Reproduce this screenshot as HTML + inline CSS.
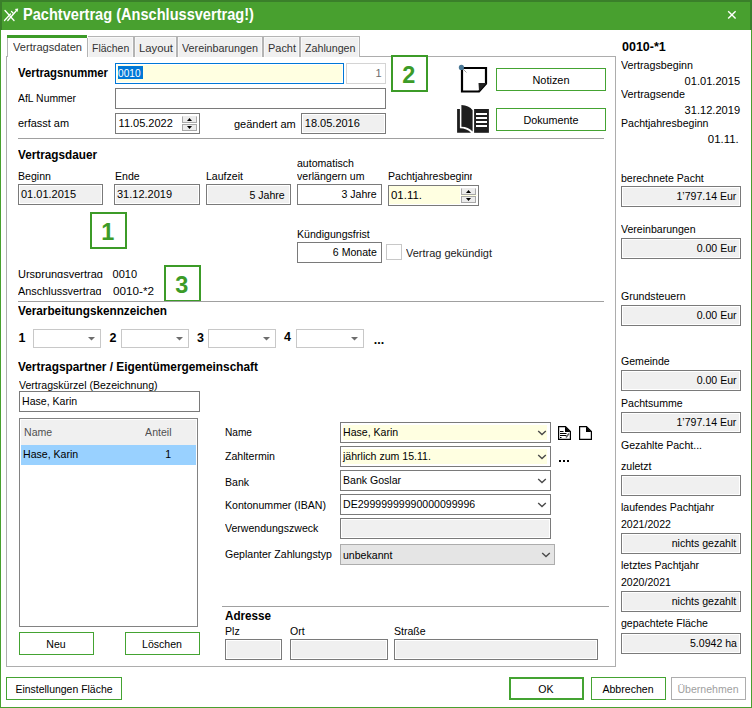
<!DOCTYPE html>
<html><head><meta charset="utf-8"><style>
html,body{margin:0;padding:0;width:752px;height:708px;overflow:hidden;background:#fff}
body{position:relative;font-family:"Liberation Sans",sans-serif}
.t{position:absolute;white-space:nowrap;line-height:1;font-family:"Liberation Sans",sans-serif}
</style></head><body>
<div style="position:absolute;left:0px;top:0px;width:752px;height:708px;background:#fff"></div>
<div style="position:absolute;left:0px;top:0px;width:752px;height:30px;background:#48a02f"></div>
<div style="position:absolute;left:0px;top:0px;width:752px;height:2px;background:#3a7f2a"></div>
<div style="position:absolute;left:0px;top:0px;width:2px;height:30px;background:#3a7f2a"></div>
<div style="position:absolute;left:750px;top:0px;width:2px;height:30px;background:#3a7f2a"></div>
<div style="position:absolute;left:0px;top:30px;width:1px;height:678px;background:#48a02f"></div>
<div style="position:absolute;left:751px;top:30px;width:1px;height:678px;background:#48a02f"></div>
<div style="position:absolute;left:0px;top:707px;width:752px;height:1px;background:#48a02f"></div>
<svg style="position:absolute;left:0;top:0" width="30" height="30" viewBox="0 0 30 30">
<g stroke="#fff" stroke-width="1.3" fill="none" stroke-linecap="round">
<line x1="5" y1="10.5" x2="14" y2="20.5"/>
<line x1="4.5" y1="20.5" x2="10.5" y2="14"/>
<line x1="7.8" y1="20.5" x2="16.5" y2="10.5"/>
<line x1="11.5" y1="11.5" x2="13" y2="13"/>
</g>
<polygon points="14.8,9 18.2,8.6 17.6,12" fill="#fff"/>
</svg>
<div class="t" style="left:23px;top:7.19px;font-size:15.6px;font-weight:bold;color:#fff;transform-origin:left;transform:scaleX(0.9349);">Pachtvertrag (Anschlussvertrag!)</div>
<svg style="position:absolute;left:722px;top:8px" width="16" height="16" viewBox="0 0 16 16">
<g stroke="#fff" stroke-width="1.4"><line x1="6.2" y1="3.2" x2="13.6" y2="10.6"/><line x1="13.6" y1="3.2" x2="6.2" y2="10.6"/></g></svg>
<div style="position:absolute;left:6px;top:56px;width:608px;height:609px;border:1px solid #adadad;background:#fff;"></div>
<div style="position:absolute;left:87px;top:36px;width:45px;height:19px;border:1px solid #b4b4b4;background:#f0f0f0;border-bottom:none;height:20px;box-shadow:inset 1px 1px 0 #f8f8f8,inset -1px 0 0 #f8f8f8"></div>
<div class="t" style="left:91.5px;top:43.19px;font-size:11px;font-weight:normal;color:#333;transform-origin:left;transform:scaleX(0.9506);">Flächen</div>
<div style="position:absolute;left:134px;top:36px;width:41px;height:19px;border:1px solid #b4b4b4;background:#f0f0f0;border-bottom:none;height:20px;box-shadow:inset 1px 1px 0 #f8f8f8,inset -1px 0 0 #f8f8f8"></div>
<div class="t" style="left:138.5px;top:43.19px;font-size:11px;font-weight:normal;color:#333;transform-origin:left;transform:scaleX(1.0295);">Layout</div>
<div style="position:absolute;left:177px;top:36px;width:84px;height:19px;border:1px solid #b4b4b4;background:#f0f0f0;border-bottom:none;height:20px;box-shadow:inset 1px 1px 0 #f8f8f8,inset -1px 0 0 #f8f8f8"></div>
<div class="t" style="left:181.5px;top:43.19px;font-size:11px;font-weight:normal;color:#333;transform-origin:left;transform:scaleX(0.9784);">Vereinbarungen</div>
<div style="position:absolute;left:263px;top:36px;width:35px;height:19px;border:1px solid #b4b4b4;background:#f0f0f0;border-bottom:none;height:20px;box-shadow:inset 1px 1px 0 #f8f8f8,inset -1px 0 0 #f8f8f8"></div>
<div class="t" style="left:267.5px;top:43.19px;font-size:11px;font-weight:normal;color:#333;transform-origin:left;transform:scaleX(0.9954);">Pacht</div>
<div style="position:absolute;left:300px;top:36px;width:58px;height:19px;border:1px solid #b4b4b4;background:#f0f0f0;border-bottom:none;height:20px;box-shadow:inset 1px 1px 0 #f8f8f8,inset -1px 0 0 #f8f8f8"></div>
<div class="t" style="left:304.5px;top:43.19px;font-size:11px;font-weight:normal;color:#333;transform-origin:left;transform:scaleX(0.9714);">Zahlungen</div>
<div style="position:absolute;left:7px;top:35px;width:81px;height:22px;background:#fff"></div>
<div style="position:absolute;left:7px;top:35px;width:80px;height:3px;background:#3c9b28"></div>
<div style="position:absolute;left:7px;top:38px;width:1px;height:19px;background:#b4b4b4"></div>
<div style="position:absolute;left:87px;top:38px;width:1px;height:19px;background:#b4b4b4"></div>
<div class="t" style="left:12.8px;top:42.19px;font-size:11px;font-weight:normal;color:#333;transform-origin:left;transform:scaleX(1.0074);">Vertragsdaten</div>
<div class="t" style="left:622px;top:40.92px;font-size:12.5px;font-weight:bold;color:#000;transform-origin:left;">0010-*1</div>
<div class="t" style="left:621px;top:60.09px;font-size:11px;font-weight:normal;color:#000;transform-origin:left;transform:scaleX(0.9730);">Vertragsbeginn</div>
<div class="t" style="right:12.00px;top:75.89px;font-size:11px;font-weight:normal;color:#000;transform-origin:right;transform:scaleX(1.0081);">01.01.2015</div>
<div class="t" style="left:621px;top:88.79px;font-size:11px;font-weight:normal;color:#000;transform-origin:left;transform:scaleX(0.9781);">Vertragsende</div>
<div class="t" style="right:12.00px;top:104.89px;font-size:11px;font-weight:normal;color:#000;transform-origin:right;transform:scaleX(1.0081);">31.12.2019</div>
<div class="t" style="left:621px;top:118.19px;font-size:11px;font-weight:normal;color:#000;transform-origin:left;transform:scaleX(0.9600);">Pachtjahresbeginn</div>
<div class="t" style="right:13.00px;top:133.79px;font-size:11px;font-weight:normal;color:#000;transform-origin:right;transform:scaleX(1.0414);">01.11.</div>
<div class="t" style="left:621px;top:172.99px;font-size:11px;font-weight:normal;color:#000;transform-origin:left;transform:scaleX(0.9600);">berechnete Pacht</div>
<div style="position:absolute;left:621px;top:186px;width:118px;height:19px;border:1px solid #7a7a7a;background:#f0f0f0;box-shadow:inset 0 0 0 1px #fff"></div>
<div class="t" style="right:15.40px;top:190.59px;font-size:11px;font-weight:normal;color:#000;transform-origin:right;transform:scaleX(0.9600);">1&#8217;797.14 Eur</div>
<div class="t" style="left:621px;top:223.99px;font-size:11px;font-weight:normal;color:#000;transform-origin:left;transform:scaleX(0.9600);">Vereinbarungen</div>
<div style="position:absolute;left:621px;top:238px;width:118px;height:19px;border:1px solid #7a7a7a;background:#f0f0f0;box-shadow:inset 0 0 0 1px #fff"></div>
<div class="t" style="right:15.40px;top:242.59px;font-size:11px;font-weight:normal;color:#000;transform-origin:right;transform:scaleX(0.9600);">0.00 Eur</div>
<div class="t" style="left:621px;top:290.79px;font-size:11px;font-weight:normal;color:#000;transform-origin:left;transform:scaleX(0.9600);">Grundsteuern</div>
<div style="position:absolute;left:621px;top:305px;width:118px;height:19px;border:1px solid #7a7a7a;background:#f0f0f0;box-shadow:inset 0 0 0 1px #fff"></div>
<div class="t" style="right:15.40px;top:309.59px;font-size:11px;font-weight:normal;color:#000;transform-origin:right;transform:scaleX(0.9600);">0.00 Eur</div>
<div class="t" style="left:621px;top:356.09px;font-size:11px;font-weight:normal;color:#000;transform-origin:left;transform:scaleX(0.9600);">Gemeinde</div>
<div style="position:absolute;left:621px;top:370px;width:118px;height:19px;border:1px solid #7a7a7a;background:#f0f0f0;box-shadow:inset 0 0 0 1px #fff"></div>
<div class="t" style="right:15.40px;top:374.59px;font-size:11px;font-weight:normal;color:#000;transform-origin:right;transform:scaleX(0.9600);">0.00 Eur</div>
<div class="t" style="left:621px;top:397.69px;font-size:11px;font-weight:normal;color:#000;transform-origin:left;transform:scaleX(0.9600);">Pachtsumme</div>
<div style="position:absolute;left:621px;top:412px;width:118px;height:19px;border:1px solid #7a7a7a;background:#f0f0f0;box-shadow:inset 0 0 0 1px #fff"></div>
<div class="t" style="right:15.40px;top:416.59px;font-size:11px;font-weight:normal;color:#000;transform-origin:right;transform:scaleX(0.9600);">1&#8217;797.14 Eur</div>
<div class="t" style="left:621px;top:460.79px;font-size:11px;font-weight:normal;color:#000;transform-origin:left;transform:scaleX(0.9600);">zuletzt</div>
<div style="position:absolute;left:621px;top:475px;width:118px;height:19px;border:1px solid #7a7a7a;background:#f0f0f0;box-shadow:inset 0 0 0 1px #fff"></div>
<div class="t" style="left:621px;top:518.79px;font-size:11px;font-weight:normal;color:#000;transform-origin:left;transform:scaleX(0.9600);">2021/2022</div>
<div style="position:absolute;left:621px;top:533px;width:118px;height:19px;border:1px solid #7a7a7a;background:#f0f0f0;box-shadow:inset 0 0 0 1px #fff"></div>
<div class="t" style="right:15.40px;top:537.59px;font-size:11px;font-weight:normal;color:#000;transform-origin:right;transform:scaleX(0.9600);">nichts gezahlt</div>
<div class="t" style="left:621px;top:576.89px;font-size:11px;font-weight:normal;color:#000;transform-origin:left;transform:scaleX(0.9600);">2020/2021</div>
<div style="position:absolute;left:621px;top:591px;width:118px;height:19px;border:1px solid #7a7a7a;background:#f0f0f0;box-shadow:inset 0 0 0 1px #fff"></div>
<div class="t" style="right:15.40px;top:595.59px;font-size:11px;font-weight:normal;color:#000;transform-origin:right;transform:scaleX(0.9600);">nichts gezahlt</div>
<div class="t" style="left:621px;top:618.49px;font-size:11px;font-weight:normal;color:#000;transform-origin:left;transform:scaleX(0.9600);">gepachtete Fläche</div>
<div style="position:absolute;left:621px;top:633px;width:118px;height:19px;border:1px solid #7a7a7a;background:#f0f0f0;box-shadow:inset 0 0 0 1px #fff"></div>
<div class="t" style="right:15.40px;top:637.59px;font-size:11px;font-weight:normal;color:#000;transform-origin:right;transform:scaleX(0.9600);">5.0942 ha</div>
<div class="t" style="left:621px;top:440.39px;font-size:11px;font-weight:normal;color:#000;transform-origin:left;transform:scaleX(0.9600);">Gezahlte Pacht...</div>
<div class="t" style="left:621px;top:502.39px;font-size:11px;font-weight:normal;color:#000;transform-origin:left;transform:scaleX(0.9600);">laufendes Pachtjahr</div>
<div class="t" style="left:621px;top:559.99px;font-size:11px;font-weight:normal;color:#000;transform-origin:left;transform:scaleX(0.9600);">letztes Pachtjahr</div>
<div class="t" style="left:18px;top:67.22px;font-size:12.5px;font-weight:bold;color:#000;transform-origin:left;transform:scaleX(0.9059);">Vertragsnummer</div>
<div style="position:absolute;left:115px;top:63px;width:227px;height:19px;border:1px solid #0078d7;background:#fff;"></div>
<div style="position:absolute;left:117px;top:65px;width:225px;height:17px;background:#ffffe1"></div>
<div style="position:absolute;left:118px;top:66px;width:25px;height:13px;background:#0078d7"></div>
<div class="t" style="left:118.2px;top:68.09px;font-size:11px;font-weight:normal;color:#fff;transform-origin:left;transform:scaleX(0.9195);">0010</div>
<div style="position:absolute;left:346px;top:63px;width:38px;height:19px;border:1px solid #d4d4d4;background:#fff;"></div>
<div class="t" style="right:370.50px;top:68.09px;font-size:11px;font-weight:normal;color:#6d6d6d;transform-origin:right;">1</div>
<div class="t" style="left:18px;top:93.19px;font-size:11px;font-weight:normal;color:#000;transform-origin:left;transform:scaleX(0.9457);">AfL Nummer</div>
<div style="position:absolute;left:115px;top:88px;width:269px;height:19px;border:1px solid #7a7a7a;background:#fff;"></div>
<div class="t" style="left:18px;top:118.49px;font-size:11px;font-weight:normal;color:#000;transform-origin:left;transform:scaleX(0.9932);">erfasst am</div>
<div style="position:absolute;left:115px;top:113px;width:83px;height:19px;border:1px solid #7a7a7a;background:#fff;"></div>
<div class="t" style="left:118.6px;top:118.09px;font-size:11px;font-weight:normal;color:#000;transform-origin:left;">11.05.2022</div>
<div style="position:absolute;left:182px;top:116px;width:13px;height:5px;background:#ececec;border:1px solid #a8a8a8;border-top-color:#ececec"></div>
<div style="position:absolute;left:182px;top:124px;width:13px;height:5px;background:#ececec;border:1px solid #a8a8a8"></div>
<svg style="position:absolute;left:182px;top:116px" width="15" height="16"><polygon points="5,5 10,5 7.5,2" fill="#000"/><polygon points="5,10 10,10 7.5,13" fill="#000"/></svg>
<div class="t" style="left:234px;top:118.59px;font-size:11px;font-weight:normal;color:#000;transform-origin:left;">geändert am</div>
<div style="position:absolute;left:301px;top:113px;width:83px;height:19px;border:1px solid #7a7a7a;background:#f0f0f0;box-shadow:inset 0 0 0 1px #fff"></div>
<div class="t" style="left:304.8px;top:118.09px;font-size:11px;font-weight:normal;color:#000;transform-origin:left;">18.05.2016</div>
<div style="position:absolute;left:18px;top:138px;width:586px;height:1px;background:#a0a0a0"></div>
<div style="position:absolute;left:391px;top:55px;width:33px;height:33px;border:2px solid #3c9b28;background:transparent;"></div>
<div class="t" style="left:208.7px;width:400px;text-align:center;top:63.61px;font-size:23.5px;font-weight:bold;color:#3c9b28;">2</div>
<svg style="position:absolute;left:450px;top:58px" width="40" height="40" viewBox="0 0 40 40">
<path d="M12 10 L36 10 L36 25.5 L29 33.5 L12 33.5 Z" fill="#fff" stroke="#000" stroke-width="2.2" stroke-linejoin="miter"/>
<path d="M28.5 25 L36.5 25 L29 33.5 Z" fill="#222"/>
<line x1="12" y1="10" x2="16.5" y2="14.5" stroke="#888" stroke-width="0.8"/>
<circle cx="11.4" cy="9.4" r="2.6" fill="#4a7896"/>
</svg>
<svg style="position:absolute;left:450px;top:100px" width="40" height="36" viewBox="0 0 40 36">
<path d="M7.1 9 H9.9 V28.3 Q17 28.3 21 32.8 H7.1 Z" fill="#1e1e1e"/>
<path d="M11.4 5.1 Q19 5.3 22.6 10.2 V31.5 Q18.5 27 11.4 26.8 Z" fill="#1e1e1e"/>
<rect x="24.1" y="9" width="14.8" height="23.8" fill="#1e1e1e"/>
<g fill="#fff"><rect x="26" y="13" width="11" height="2"/><rect x="26" y="17" width="11" height="2"/><rect x="26" y="21" width="11" height="2"/><rect x="26" y="25" width="11" height="2"/></g>
</svg>
<div style="position:absolute;left:496px;top:68px;width:108px;height:21px;border:1px solid #44a332;background:#fff;"></div>
<div class="t" style="left:350.5px;width:400px;text-align:center;top:75.09px;font-size:11px;font-weight:normal;color:#000;transform:scaleX(0.9921);">Notizen</div>
<div style="position:absolute;left:496px;top:108px;width:108px;height:21px;border:1px solid #44a332;background:#fff;"></div>
<div class="t" style="left:350.5px;width:400px;text-align:center;top:115.09px;font-size:11px;font-weight:normal;color:#000;transform:scaleX(0.9778);">Dokumente</div>
<div class="t" style="left:18px;top:149.02px;font-size:12.5px;font-weight:bold;color:#000;transform-origin:left;transform:scaleX(0.9397);">Vertragsdauer</div>
<div class="t" style="left:18px;top:171.29px;font-size:11px;font-weight:normal;color:#000;transform-origin:left;transform:scaleX(0.9600);">Beginn</div>
<div class="t" style="left:114.5px;top:171.29px;font-size:11px;font-weight:normal;color:#000;transform-origin:left;transform:scaleX(0.9600);">Ende</div>
<div class="t" style="left:206px;top:171.29px;font-size:11px;font-weight:normal;color:#000;transform-origin:left;transform:scaleX(0.9600);">Laufzeit</div>
<div class="t" style="left:297px;top:158.39px;font-size:11px;font-weight:normal;color:#000;transform-origin:left;transform:scaleX(0.9600);">automatisch</div>
<div class="t" style="left:297px;top:170.79px;font-size:11px;font-weight:normal;color:#000;transform-origin:left;transform:scaleX(0.9600);">verlängern um</div>
<div style="position:absolute;left:380px;top:160px;width:92px;height:30px;overflow:hidden">
<div class="t" style="left:8px;top:10.59px;font-size:11px;font-weight:normal;color:#000;transform-origin:left;transform:scaleX(0.9600);">Pachtjahresbeginn</div>
</div>
<div style="position:absolute;left:18px;top:184px;width:83px;height:19px;border:1px solid #7a7a7a;background:#f0f0f0;box-shadow:inset 0 0 0 1px #fff"></div>
<div class="t" style="left:21px;top:189.09px;font-size:11px;font-weight:normal;color:#000;transform-origin:left;">01.01.2015</div>
<div style="position:absolute;left:114px;top:184px;width:84px;height:19px;border:1px solid #7a7a7a;background:#f0f0f0;box-shadow:inset 0 0 0 1px #fff"></div>
<div class="t" style="left:117px;top:189.09px;font-size:11px;font-weight:normal;color:#000;transform-origin:left;">31.12.2019</div>
<div style="position:absolute;left:206px;top:184px;width:83px;height:19px;border:1px solid #7a7a7a;background:#f0f0f0;box-shadow:inset 0 0 0 1px #fff"></div>
<div class="t" style="right:467.00px;top:189.79px;font-size:11px;font-weight:normal;color:#000;transform-origin:right;transform:scaleX(0.9600);">5 Jahre</div>
<div style="position:absolute;left:297px;top:184px;width:83px;height:19px;border:1px solid #7a7a7a;background:#fff;"></div>
<div class="t" style="right:375.00px;top:189.09px;font-size:11px;font-weight:normal;color:#000;transform-origin:right;transform:scaleX(0.9600);">3 Jahre</div>
<div style="position:absolute;left:388px;top:185px;width:89px;height:19px;border:1px solid #7a7a7a;background:#fff;"></div>
<div style="position:absolute;left:389px;top:186px;width:71px;height:18px;background:#ffffe1"></div>
<div style="position:absolute;left:461px;top:195px;width:16px;height:1px;background:#ffffe1"></div>
<div class="t" style="left:391px;top:190.09px;font-size:11px;font-weight:normal;color:#000;transform-origin:left;transform:scaleX(1.0414);">01.11.</div>
<div style="position:absolute;left:461px;top:188px;width:13px;height:5px;background:#ececec;border:1px solid #a8a8a8;border-top-color:#ececec"></div>
<div style="position:absolute;left:461px;top:196px;width:13px;height:5px;background:#ececec;border:1px solid #a8a8a8"></div>
<svg style="position:absolute;left:461px;top:188px" width="15" height="16"><polygon points="5,5 10,5 7.5,2" fill="#000"/><polygon points="5,10 10,10 7.5,13" fill="#000"/></svg>
<div style="position:absolute;left:90px;top:212px;width:33px;height:33px;border:2px solid #3c9b28;background:transparent;"></div>
<div class="t" style="left:-92.3px;width:400px;text-align:center;top:220.61px;font-size:23.5px;font-weight:bold;color:#3c9b28;">1</div>
<div class="t" style="left:297px;top:229.19px;font-size:11px;font-weight:normal;color:#000;transform-origin:left;transform:scaleX(0.9600);">Kündigungsfrist</div>
<div style="position:absolute;left:297px;top:242px;width:83px;height:19px;border:1px solid #7a7a7a;background:#fff;"></div>
<div class="t" style="right:375.00px;top:247.09px;font-size:11px;font-weight:normal;color:#000;transform-origin:right;transform:scaleX(0.9600);">6 Monate</div>
<div style="position:absolute;left:386px;top:244px;width:14px;height:14px;border:1px solid #c8c8c8;background:#fff;"></div>
<div class="t" style="left:405.5px;top:248.09px;font-size:11px;font-weight:normal;color:#222;transform-origin:left;transform:scaleX(0.9974);">Vertrag gekündigt</div>
<div class="t" style="left:18px;top:269.39px;font-size:11px;font-weight:normal;color:#000;height:8.41px;overflow:hidden;transform-origin:left;">Ursprungsvertrag</div>
<div class="t" style="left:112.6px;top:269.39px;font-size:11px;font-weight:normal;color:#000;transform-origin:left;">0010</div>
<div class="t" style="left:18px;top:286.39px;font-size:11px;font-weight:normal;color:#000;height:8.41px;overflow:hidden;transform-origin:left;transform:scaleX(0.9897);">Anschlussvertrag</div>
<div class="t" style="left:112.6px;top:286.39px;font-size:11px;font-weight:normal;color:#000;transform-origin:left;transform:scaleX(1.0640);">0010-*2</div>
<div style="position:absolute;left:164px;top:265px;width:33px;height:33px;border:2px solid #3c9b28;background:transparent;"></div>
<div class="t" style="left:-18.30000000000001px;width:400px;text-align:center;top:273.61px;font-size:23.5px;font-weight:bold;color:#3c9b28;">3</div>
<div style="position:absolute;left:18px;top:301px;width:586px;height:1px;background:#a0a0a0"></div>
<div class="t" style="left:18px;top:305.02px;font-size:12.5px;font-weight:bold;color:#000;transform-origin:left;transform:scaleX(0.9407);">Verarbeitungskennzeichen</div>
<div class="t" style="left:18.6px;top:332.12px;font-size:12.5px;font-weight:bold;color:#000;transform-origin:left;">1</div>
<div style="position:absolute;left:33px;top:329px;width:66px;height:17px;border:1px solid #c8c8c8;background:#fff;"></div>
<svg style="position:absolute;left:88px;top:337px" width="8" height="4"><polygon points="0,0 7,0 3.5,3.5" fill="#6d6d6d"/></svg>
<div class="t" style="left:109.5px;top:332.12px;font-size:12.5px;font-weight:bold;color:#000;transform-origin:left;">2</div>
<div style="position:absolute;left:121px;top:329px;width:66px;height:17px;border:1px solid #c8c8c8;background:#fff;"></div>
<svg style="position:absolute;left:176px;top:337px" width="8" height="4"><polygon points="0,0 7,0 3.5,3.5" fill="#6d6d6d"/></svg>
<div class="t" style="left:197px;top:332.12px;font-size:12.5px;font-weight:bold;color:#000;transform-origin:left;">3</div>
<div style="position:absolute;left:208px;top:329px;width:66px;height:17px;border:1px solid #c8c8c8;background:#fff;"></div>
<svg style="position:absolute;left:263px;top:337px" width="8" height="4"><polygon points="0,0 7,0 3.5,3.5" fill="#6d6d6d"/></svg>
<div class="t" style="left:284px;top:331.22px;font-size:12.5px;font-weight:bold;color:#000;transform-origin:left;">4</div>
<div style="position:absolute;left:296px;top:329px;width:66px;height:17px;border:1px solid #c8c8c8;background:#fff;"></div>
<svg style="position:absolute;left:351px;top:337px" width="8" height="4"><polygon points="0,0 7,0 3.5,3.5" fill="#6d6d6d"/></svg>
<div class="t" style="left:373.7px;top:333.72px;font-size:12.5px;font-weight:bold;color:#000;transform-origin:left;">...</div>
<div class="t" style="left:18px;top:361.32px;font-size:12.5px;font-weight:bold;color:#000;transform-origin:left;transform:scaleX(0.9492);">Vertragspartner / Eigentümergemeinschaft</div>
<div class="t" style="left:19px;top:379.99px;font-size:11px;font-weight:normal;color:#000;transform-origin:left;transform:scaleX(0.9600);">Vertragskürzel (Bezeichnung)</div>
<div style="position:absolute;left:19px;top:391px;width:179px;height:19px;border:1px solid #7a7a7a;background:#fff;"></div>
<div class="t" style="left:21.5px;top:396.09px;font-size:11px;font-weight:normal;color:#000;transform-origin:left;transform:scaleX(0.9600);">Hase, Karin</div>
<div style="position:absolute;left:19px;top:418px;width:177px;height:207px;border:1px solid #828282;background:#fff;"></div>
<div style="position:absolute;left:21px;top:420px;width:175px;height:25px;background:#f0f0f0"></div>
<div class="t" style="left:24px;top:427.39px;font-size:11px;font-weight:normal;color:#505050;transform-origin:left;transform:scaleX(0.9600);">Name</div>
<div class="t" style="right:580.00px;top:427.39px;font-size:11px;font-weight:normal;color:#505050;transform-origin:right;transform:scaleX(0.9600);">Anteil</div>
<div style="position:absolute;left:21px;top:445px;width:175px;height:20px;background:#99d1ff"></div>
<div class="t" style="left:23.3px;top:449.49px;font-size:11px;font-weight:normal;color:#000;transform-origin:left;transform:scaleX(0.9600);">Hase, Karin</div>
<div class="t" style="right:581.00px;top:449.49px;font-size:11px;font-weight:normal;color:#000;transform-origin:right;transform:scaleX(0.9600);">1</div>
<div style="position:absolute;left:19px;top:632px;width:73px;height:21px;border:1px solid #44a332;background:#fff;"></div>
<div class="t" style="left:-144px;width:400px;text-align:center;top:639.09px;font-size:11px;font-weight:normal;color:#000;transform:scaleX(0.9600);">Neu</div>
<div style="position:absolute;left:125px;top:632px;width:73px;height:21px;border:1px solid #44a332;background:#fff;"></div>
<div class="t" style="left:-38px;width:400px;text-align:center;top:639.09px;font-size:11px;font-weight:normal;color:#000;transform:scaleX(0.9600);">Löschen</div>
<div class="t" style="left:225px;top:427.29px;font-size:11px;font-weight:normal;color:#000;transform-origin:left;transform:scaleX(0.9202);">Name</div>
<div style="position:absolute;left:340px;top:422px;width:209px;height:19px;border:1px solid #7a7a7a;background:#fff;"></div>
<div style="position:absolute;left:343px;top:425px;width:204px;height:15px;background:#ffffe1"></div>
<svg style="position:absolute;left:537px;top:430px" width="10" height="7"><polyline points="1.2,0.9 5,4.6 8.8,0.9" fill="none" stroke="#4a4a4a" stroke-width="1.35"/></svg>
<div class="t" style="left:343px;top:427.09px;font-size:11px;font-weight:normal;color:#000;transform-origin:left;transform:scaleX(0.9600);">Hase, Karin</div>
<div class="t" style="left:225px;top:451.29px;font-size:11px;font-weight:normal;color:#000;transform-origin:left;transform:scaleX(0.9623);">Zahltermin</div>
<div style="position:absolute;left:340px;top:446px;width:209px;height:19px;border:1px solid #7a7a7a;background:#fff;"></div>
<div style="position:absolute;left:343px;top:449px;width:204px;height:15px;background:#ffffe1"></div>
<svg style="position:absolute;left:537px;top:454px" width="10" height="7"><polyline points="1.2,0.9 5,4.6 8.8,0.9" fill="none" stroke="#4a4a4a" stroke-width="1.35"/></svg>
<div class="t" style="left:343px;top:451.09px;font-size:11px;font-weight:normal;color:#000;transform-origin:left;transform:scaleX(0.9600);">jährlich zum 15.11.</div>
<div class="t" style="left:225px;top:477.09px;font-size:11px;font-weight:normal;color:#000;transform-origin:left;transform:scaleX(0.9600);">Bank</div>
<div style="position:absolute;left:340px;top:470px;width:209px;height:19px;border:1px solid #7a7a7a;background:#fff;"></div>
<svg style="position:absolute;left:537px;top:478px" width="10" height="7"><polyline points="1.2,0.9 5,4.6 8.8,0.9" fill="none" stroke="#4a4a4a" stroke-width="1.35"/></svg>
<div class="t" style="left:343px;top:475.09px;font-size:11px;font-weight:normal;color:#000;transform-origin:left;transform:scaleX(0.9600);">Bank Goslar</div>
<div class="t" style="left:225px;top:499.99px;font-size:11px;font-weight:normal;color:#000;transform-origin:left;transform:scaleX(0.9606);">Kontonummer (IBAN)</div>
<div style="position:absolute;left:340px;top:494px;width:209px;height:19px;border:1px solid #7a7a7a;background:#fff;"></div>
<svg style="position:absolute;left:537px;top:502px" width="10" height="7"><polyline points="1.2,0.9 5,4.6 8.8,0.9" fill="none" stroke="#4a4a4a" stroke-width="1.35"/></svg>
<div class="t" style="left:343px;top:499.09px;font-size:11px;font-weight:normal;color:#000;transform-origin:left;transform:scaleX(0.9600);">DE29999999990000099996</div>
<div class="t" style="left:225px;top:522.89px;font-size:11px;font-weight:normal;color:#000;transform-origin:left;transform:scaleX(0.9600);">Verwendungszweck</div>
<div style="position:absolute;left:340px;top:518px;width:209px;height:19px;border:1px solid #7a7a7a;background:#f0f0f0;box-shadow:inset 0 0 0 1px #fff"></div>
<div class="t" style="left:225px;top:549.49px;font-size:11px;font-weight:normal;color:#000;transform-origin:left;transform:scaleX(0.9600);">Geplanter Zahlungstyp</div>
<div style="position:absolute;left:340px;top:544px;width:213px;height:19px;border:1px solid #adadad;background:#e5e5e5;"></div>
<svg style="position:absolute;left:541px;top:552px" width="10" height="7"><polyline points="1.2,0.9 5,4.6 8.8,0.9" fill="none" stroke="#4a4a4a" stroke-width="1.35"/></svg>
<div class="t" style="left:343px;top:550.09px;font-size:11px;font-weight:normal;color:#000;transform-origin:left;transform:scaleX(0.9600);">unbekannt</div>
<svg style="position:absolute;left:558px;top:426px" width="13" height="14" viewBox="0 0 13 14">
<path d="M0.6 0.6 H7.5 L12.4 5.5 V13.4 H0.6 Z" fill="#fff" stroke="#000" stroke-width="1.2"/>
<path d="M7 0.6 L12.4 6 H7 Z" fill="#000"/>
<g fill="#000"><rect x="2" y="5" width="3.5" height="1"/><rect x="2" y="7" width="6.5" height="1"/><rect x="2" y="9" width="6.5" height="1"/><rect x="2" y="11" width="1.5" height="1"/></g>
<path d="M8 11.5 L11 7.5" stroke="#666" stroke-width="1.6"/>
</svg>
<svg style="position:absolute;left:579px;top:426px" width="13" height="14" viewBox="0 0 13 14">
<path d="M0.6 0.6 H7.5 L12.4 5.5 V13.4 H0.6 Z" fill="#fff" stroke="#000" stroke-width="1.2"/>
<path d="M7 0.6 L12.4 6 H7 Z" fill="#000"/>
</svg>
<div style="position:absolute;left:559px;top:460px;width:2px;height:2px;background:#000"></div>
<div style="position:absolute;left:563px;top:460px;width:2px;height:2px;background:#000"></div>
<div style="position:absolute;left:567px;top:460px;width:2px;height:2px;background:#000"></div>
<div style="position:absolute;left:222px;top:606px;width:387px;height:1px;background:#a0a0a0"></div>
<div class="t" style="left:225px;top:610.32px;font-size:12.5px;font-weight:bold;color:#000;transform-origin:left;transform:scaleX(0.9324);">Adresse</div>
<div class="t" style="left:225px;top:626.19px;font-size:11px;font-weight:normal;color:#000;transform-origin:left;transform:scaleX(0.9600);">Plz</div>
<div class="t" style="left:290px;top:626.19px;font-size:11px;font-weight:normal;color:#000;transform-origin:left;transform:scaleX(0.9600);">Ort</div>
<div class="t" style="left:394px;top:626.19px;font-size:11px;font-weight:normal;color:#000;transform-origin:left;transform:scaleX(0.9600);">Straße</div>
<div style="position:absolute;left:225px;top:639px;width:55px;height:19px;border:1px solid #7a7a7a;background:#f0f0f0;box-shadow:inset 0 0 0 1px #fff"></div>
<div style="position:absolute;left:290px;top:639px;width:96px;height:19px;border:1px solid #7a7a7a;background:#f0f0f0;box-shadow:inset 0 0 0 1px #fff"></div>
<div style="position:absolute;left:394px;top:639px;width:202px;height:19px;border:1px solid #7a7a7a;background:#f0f0f0;box-shadow:inset 0 0 0 1px #fff"></div>
<div style="position:absolute;left:6px;top:677px;width:114px;height:21px;border:1px solid #44a332;background:#fff;"></div>
<div class="t" style="left:-136.5px;width:400px;text-align:center;top:683.89px;font-size:11px;font-weight:normal;color:#000;transform:scaleX(0.9499);">Einstellungen Fläche</div>
<div style="position:absolute;left:509px;top:677px;width:71px;height:19px;border:2px solid #44a332;background:#fff;"></div>
<div class="t" style="left:346px;width:400px;text-align:center;top:683.89px;font-size:11px;font-weight:normal;color:#000;transform:scaleX(0.9600);">OK</div>
<div style="position:absolute;left:591px;top:677px;width:73px;height:21px;border:1px solid #44a332;background:#fff;"></div>
<div class="t" style="left:428px;width:400px;text-align:center;top:683.89px;font-size:11px;font-weight:normal;color:#000;transform:scaleX(0.9600);">Abbrechen</div>
<div style="position:absolute;left:671px;top:677px;width:73px;height:21px;border:1px solid #adadad;background:#fff;"></div>
<div class="t" style="left:508px;width:400px;text-align:center;top:683.89px;font-size:11px;font-weight:normal;color:#a0a0a0;transform:scaleX(0.9600);">Übernehmen</div>
</body></html>
